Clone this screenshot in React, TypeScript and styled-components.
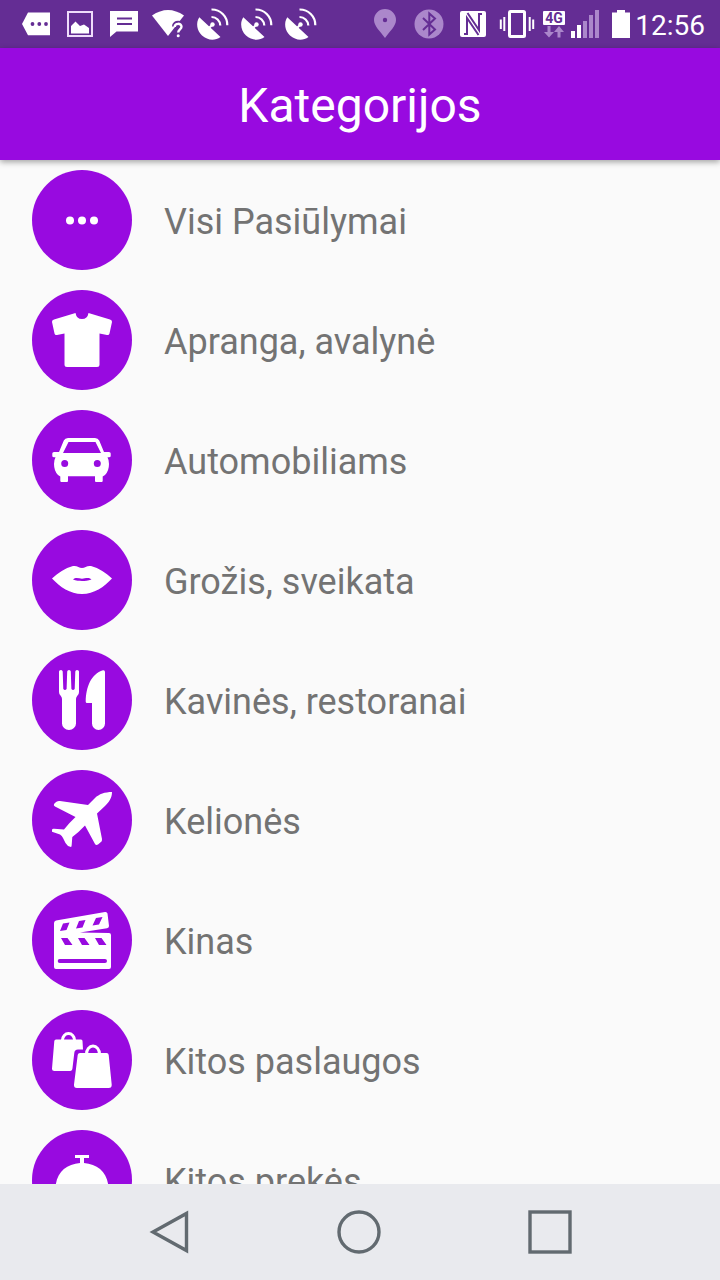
import React from 'react';
import styled, { createGlobalStyle } from 'styled-components';

const PURPLE = '#980ae0';
const STATUS = '#642d94';
const FADED = '#ab87cb';

const GlobalStyle = createGlobalStyle`
  * { box-sizing: border-box; }
  body {
    margin: 0;
    background: #fafafa;
    font-family: Roboto, "Liberation Sans", sans-serif;
  }
  button {
    border: 0;
    padding: 0;
    background: none;
    font: inherit;
    cursor: pointer;
  }
`;

const Screen = styled.div`
  display: flex;
  flex-direction: column;
  height: 100vh;
`;

const StatusBar = styled.div`
  display: flex;
  flex: none;
  justify-content: space-between;
  height: 48px;
  padding: 0 15px 0 14px;
  background: ${STATUS};
  color: #fff;
`;

const StatusGroup = styled.div`
  display: flex;
  align-items: center;
`;

const StatusIcon = styled.svg<{ $width?: number }>`
  display: block;
  width: ${(p) => p.$width ?? 44}px;
  height: 48px;
`;

const Clock = styled.time`
  padding: 4px 0 0 2px;
  font-size: 28px;
  line-height: 32px;
`;

const AppBar = styled.header`
  position: relative;
  z-index: 1;
  display: flex;
  flex: none;
  align-items: center;
  justify-content: center;
  height: 112px;
  padding-top: 4px;
  background: ${PURPLE};
  box-shadow: 0 2px 6px rgba(0, 0, 0, 0.36);
`;

const Title = styled.h1`
  margin: 0;
  color: #fff;
  font-size: 48px;
  font-weight: 400;
  line-height: 56px;
`;

const CategoryList = styled.ul`
  flex: 1;
  min-height: 0;
  margin: 0;
  padding: 0;
  overflow: hidden;
  list-style: none;
`;

const CategoryButton = styled.button`
  display: flex;
  align-items: center;
  gap: 32px;
  width: 100%;
  height: 120px;
  padding: 0 32px;
  text-align: left;
`;

const CategoryIcon = styled.svg`
  flex: none;
  width: 100px;
  height: 100px;
  border-radius: 50%;
  background: ${PURPLE};
  fill: #fff;
`;

const CategoryName = styled.span`
  padding-top: 4px;
  color: #737373;
  font-size: 36px;
  line-height: 44px;
`;

const NavBar = styled.nav`
  display: grid;
  flex: none;
  grid-template-columns: repeat(3, 1fr);
  height: 96px;
  padding: 0 74px;
  background: #e9eaee;
`;

const NavButton = styled.button`
  display: flex;
  align-items: center;
  justify-content: center;
`;

const NavIcon = styled.svg`
  width: 48px;
  height: 48px;
  fill: none;
  stroke: #626a70;
  stroke-width: 3.4;
`;

const Dish = () => (
  <StatusIcon viewBox="0 0 44 48" fill="none" stroke="#fff" strokeWidth="2.2">
    <path d="M9.3 17.3C5.5 23 7 31 12 35.5C17.5 40.5 25 41 30.5 37Z" fill="#fff" stroke="none" />
    <path d="M19 28L23 24" />
    <circle cx="22.5" cy="24.5" r="2.2" fill="#fff" stroke="none" />
    <path d="M21.5 17A8.7 8.7 0 0 1 30.3 25.5M21.5 9.5A15.5 15.5 0 0 1 37.3 25.3" />
  </StatusIcon>
);

const categories: { name: string; icon: React.ReactNode }[] = [
  {
    name: 'Visi Pasiūlymai',
    icon: (
      <>
        <circle cx="38" cy="50.5" r="4" />
        <circle cx="50" cy="50.5" r="4" />
        <circle cx="62" cy="50.5" r="4" />
      </>
    ),
  },
  {
    name: 'Apranga, avalynė',
    icon: (
      <path d="M43.5 23L22 29.5Q19.7 30.3 20 32L22.5 43.5Q23 45.5 25 45L32.5 43.5V74.5Q32.5 77 35 77H65Q67.5 77 67.5 74.5V43.5L75 45Q77 45.5 77.5 43.5L80 32Q80.3 30.3 78 29.5L56.5 23Q55.5 29 50 29Q44.5 29 43.5 23Z" />
    ),
  },
  {
    name: 'Automobiliams',
    icon: (
      <path
        fillRule="evenodd"
        d="M36 28H63Q66 28 67.2 30.5L72 42H77Q78.7 42 78.7 43.5V46Q78.7 47.3 77 47.3H75.5Q77 50 77 54Q77 61 73 65L70.7 66.5V71Q70.7 72 69.5 72H64Q63 72 63 71V66.3H36V71Q36 72 35 72H29.5Q28.3 72 28.3 71V66.5L26 65Q22 61 22 54Q22 50 23.5 47.3H22Q20.3 47.3 20.3 46V43.5Q20.3 42 22 42H27L31.8 30.5Q33 28 36 28ZM36.5 32L31 43H69L63.5 32ZM32.7 50A3.5 3.5 0 1 0 32.7 57A3.5 3.5 0 1 0 32.7 50ZM65.3 50A3.5 3.5 0 1 0 65.3 57A3.5 3.5 0 1 0 65.3 50Z"
      />
    ),
  },
  {
    name: 'Grožis, sveikata',
    icon: (
      <path
        fillRule="evenodd"
        d="M20 48.5C26 43 33 38 41 36C45 35.3 47 38 50 38C53 38 55 35.3 59 36C67 38 74 43 80 48.5C72 57 62 64 50 64C38 64 28 57 20 48.5ZM41 49.6C44 50.8 47 51 50 51C53 51 56 50.8 59.5 49.4C56 46.8 53 48.8 50 48.8C47 48.8 44 46.8 41 49.6Z"
      />
    ),
  },
  {
    name: 'Kavinės, restoranai',
    icon: (
      <>
        <path d="M27 21.5Q27 20 29 20Q30.5 20 30.7 21.5L31.3 39Q33 41 34.6 39L35.2 21.5Q35.4 20 37 20Q38.6 20 38.8 21.5L39.4 39Q41 41 42.7 39L43.3 21.5Q43.5 20 45 20Q47 20 47 21.5V42Q47 44 45.5 45.5Q44 47 44 49V73.5A7 6.5 0 0 1 30 73.5V49Q30 47 28.5 45.5Q27 44 27 42Z" />
        <path d="M73 22V73.5A6.5 6.5 0 0 1 60 73.5V53H55Q53.7 53 53.7 51.5C54 37 59 24 71 20.3Q73 20 73 22Z" />
      </>
    ),
  },
  {
    name: 'Kelionės',
    icon: (
      <path d="M80 22C73 22 67 24 63 28L56 35L28 31Q25 30.5 23.5 32.5L22 34Q21.3 35.5 23 36.5L43.5 47Q37 53 32 59.5L22 58.7Q20 58.5 20 60V61.7L28 64.5Q30 65.5 31 68Q33 73 36 76L39 77Q39.5 77 39.7 75L40.3 67Q47 62 53 55.5L63 74Q64 75.5 66 74.5L69.5 71.5Q70 71 70 69L65 43.5L73 36C77 32 80 28 80 22Z" />
    ),
  },
  {
    name: 'Kinas',
    icon: (
      <path
        fillRule="evenodd"
        d="M24 30.5L73 22Q75 21.7 75.5 23.5L77 36Q77 38 75 38.3L48 42.5L77 43Q79 43 79 45V77Q79 79 77 79H24Q22 79 22 77V33Q22 31 24 30.5ZM31 33.5L37.5 32.5L34.5 40L28 41ZM47 31L53.5 30L50.5 37.5L44 38.5ZM64 28L70.5 27L67 34.5L60.5 35.5ZM29 48H35.5L40.5 55H33ZM46 48H52.5L57.5 55H50ZM63 48H69.5L74.5 55H67ZM27.7 69A2 2 0 0 0 27.7 73H73A2 2 0 0 0 73 69Z"
      />
    ),
  },
  {
    name: 'Kitos paslaugos',
    icon: (
      <>
        <path d="M24 29.5H49Q50.5 29.5 50.5 31L51 39.5H46Q42.5 39.5 42.3 43L40.5 58Q40.3 61 38 61H22.5Q20 61 20 58.5L22.3 31Q22.5 29.5 24 29.5Z" />
        <path d="M48 43H74.5Q76.5 43 76.7 45L79.7 74.5Q80 78 76.5 78H45Q41.7 78 42 74.5L45.7 45Q46 43 48 43Z" />
        <path
          d="M30.5 30A6 6.5 0 0 1 42.5 30M54.5 44A6.5 8 0 0 1 67.5 44"
          fill="none"
          stroke="#fff"
          strokeWidth="3"
        />
      </>
    ),
  },
  {
    name: 'Kitos prekės',
    icon: (
      <>
        <path d="M43 25H57V28H52V33C66 34 76 43 76.5 58H23.5C24 43 34 34 48 33V28H43Z" />
        <rect x="20" y="61" width="60" height="5" rx="2" />
      </>
    ),
  },
];

export default function App() {
  return (
    <Screen>
      <GlobalStyle />
      <StatusBar>
        <StatusGroup>
          <StatusIcon viewBox="0 0 44 48">
            <path d="M8 24L14 12.5H36V35.3H14Z" fill="#fff" />
            <g fill={STATUS}>
              <circle cx="18.5" cy="24" r="1.9" />
              <circle cx="25.3" cy="24" r="1.9" />
              <circle cx="32" cy="24" r="1.9" />
            </g>
          </StatusIcon>
          <StatusIcon viewBox="0 0 44 48">
            <rect x="10" y="12" width="24" height="24" fill="none" stroke="#efdcfb" strokeWidth="2" />
            <path d="M13 33.5V26L17.5 21.5L22 26L26 24.5L31 28V33.5Z" fill="#fff" />
          </StatusIcon>
          <StatusIcon viewBox="0 0 44 48">
            <path d="M8 11H36V31.5H14.5L8 37Z" fill="#fff" />
            <path d="M15 18.5H30M15 24H30" stroke={STATUS} strokeWidth="2" />
          </StatusIcon>
          <StatusIcon viewBox="0 0 44 48">
            <path d="M6 15.5Q22 4.5 38 15.5L22 36Z" fill="#fff" />
            <path
              d="M28.7 26.5C28.7 22.6 35.5 22.6 35.5 26.500C35.5 29 32.2 29.3 32.2 32.500"
              fill="none"
              stroke={STATUS}
              strokeWidth="5.5"
            />
            <path
              d="M28.7 27C28.7 22.8 35.5 22.8 35.5 26.800C35.5 29.300 32.2 29.500 32.2 32.500"
              fill="none"
              stroke="#fff"
              strokeWidth="2.4"
            />
            <circle cx="32.2" cy="35.800" r="1.500" fill="#fff" />
          </StatusIcon>
          <Dish />
          <Dish />
          <Dish />
        </StatusGroup>
        <StatusGroup>
          <StatusIcon viewBox="0 0 44 48">
            <path d="M22 9A11 11 0 0 0 11 20C11 26 17 31 22 38C27 31 33 26 33 20A11 11 0 0 0 22 9Z" fill={FADED} />
            <circle cx="22" cy="20" r="2.2" fill={STATUS} />
          </StatusIcon>
          <StatusIcon viewBox="0 0 44 48">
            <circle cx="22" cy="24" r="14.5" fill={FADED} />
            <path d="M16 18L28 29.5L22.3 34.5V13.5L28 18.5L16 30" fill="none" stroke={STATUS} strokeWidth="2" />
          </StatusIcon>
          <StatusIcon viewBox="0 0 44 48">
            <rect x="9" y="11" width="26" height="26" rx="2" fill="#fff" />
            <path
              d="M13 34H16V18L27.500 35M31 14H28V30L16.500 13"
              fill="none"
              stroke={STATUS}
              strokeWidth="2"
            />
          </StatusIcon>
          <StatusIcon viewBox="0 0 44 48" fill="none" stroke="#fff">
            <rect x="14.5" y="11.5" width="15" height="25" rx="1" strokeWidth="3" />
            <path d="M9.3 17V31M5.8 19.5V29M34.7 17V31M38.2 19.5V29" strokeWidth="2" />
          </StatusIcon>
          <StatusIcon viewBox="0 0 30 48" $width={30}>
            <rect x="4" y="11" width="22" height="14" rx="1" fill="#fff" />
            <text x="15" y="23" fontSize="14" fontWeight="700" textAnchor="middle" fill={STATUS}>
              4G
            </text>
            <path
              d="M8.5 26H11.5V32H15L10 37.5L5 32H8.5ZM18.5 37.5H21.5V32H25L20 26L15 32H18.5Z"
              fill={FADED}
            />
          </StatusIcon>
          <StatusIcon viewBox="0 0 36 48" $width={36}>
            <path d="M2 31H6V38H2ZM8 25H12V38H8Z" fill="#fff" />
            <path d="M14 21H18V38H14ZM20 15H24V38H20ZM26 10H30V38H26Z" fill={FADED} />
          </StatusIcon>
          <StatusIcon viewBox="0 0 28 48" $width={28}>
            <path d="M12 10H20V12.5H25V38H7V12.5H12Z" fill="#fff" />
          </StatusIcon>
          <Clock>12:56</Clock>
        </StatusGroup>
      </StatusBar>
      <AppBar>
        <Title>Kategorijos</Title>
      </AppBar>
      <CategoryList>
        {categories.map((c) => (
          <li key={c.name}>
            <CategoryButton type="button">
              <CategoryIcon viewBox="0 0 100 100" aria-hidden="true">
                {c.icon}
              </CategoryIcon>
              <CategoryName>{c.name}</CategoryName>
            </CategoryButton>
          </li>
        ))}
      </CategoryList>
      <NavBar>
        <NavButton type="button" aria-label="Atgal">
          <NavIcon viewBox="0 0 48 48">
            <path d="M41.5 5.500V42.500L8 24Z" />
          </NavIcon>
        </NavButton>
        <NavButton type="button" aria-label="Pradžia">
          <NavIcon viewBox="0 0 48 48">
            <circle cx="23" cy="24" r="20" />
          </NavIcon>
        </NavButton>
        <NavButton type="button" aria-label="Naujausios programos">
          <NavIcon viewBox="0 0 48 48">
            <rect x="3" y="4" width="40" height="40" />
          </NavIcon>
        </NavButton>
      </NavBar>
    </Screen>
  );
}
